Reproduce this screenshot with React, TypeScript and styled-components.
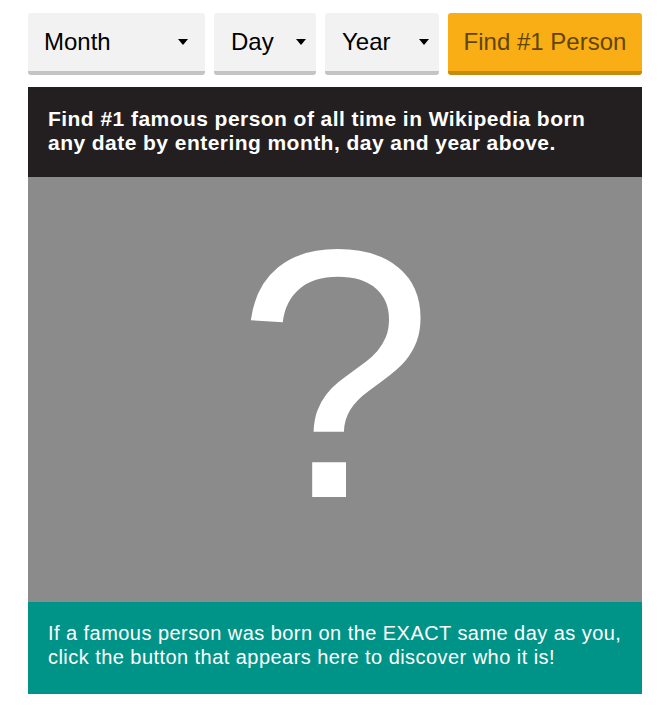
import React from 'react';
import styled, { createGlobalStyle } from 'styled-components';

const GlobalStyle = createGlobalStyle`
  body {
    margin: 0;
    background: #ffffff;
    font-family: 'Liberation Sans', Arial, sans-serif;
  }
`;

const Page = styled.div`
  width: 614px;
  padding: 13px 0 14px 28px;
`;

const Toolbar = styled.div`
  display: flex;
  gap: 9px;
  margin-bottom: 12px;
`;

const Dropdown = styled.div<{ $width: number; $padRight: number }>`
  box-sizing: border-box;
  width: ${(p) => p.$width}px;
  height: 62px;
  display: flex;
  align-items: center;
  padding: 0 ${(p) => p.$padRight}px 0 16px;
  background: #f2f2f2;
  border-bottom: 4px solid #c4c4c4;
  border-radius: 3px;
  font-size: 24px;
  color: #000;
  cursor: pointer;
`;

const Label = styled.span<{ $shift?: number }>`
  flex: 1;
  padding-left: ${(p) => p.$shift ?? 0}px;
`;

const FindButton = styled.button`
  box-sizing: border-box;
  width: 194px;
  height: 62px;
  padding: 0;
  border: none;
  border-bottom: 4px solid #c78b0f;
  border-radius: 3px;
  background: #f9ae16;
  color: #604500;
  font-family: 'Liberation Sans', Arial, sans-serif;
  font-size: 24px;
  cursor: pointer;
`;

const Card = styled.div`
  width: 614px;
`;

const Intro = styled.div`
  background: #231f20;
  color: #fff;
  font-weight: bold;
  font-size: 21px;
  letter-spacing: 0.45px;
  line-height: 24px;
  padding: 20px 20px 22px;
`;

const Portrait = styled.div`
  box-sizing: border-box;
  height: 425px;
  padding-top: 20px;
  background: #8b8b8b;
  color: #fff;
  text-align: center;
  font-size: 355px;
  line-height: 355px;
`;

const Hint = styled.div`
  background: #009488;
  color: #fff;
  font-size: 20px;
  letter-spacing: 0.45px;
  line-height: 24px;
  padding: 19px 10px 25px 20px;
`;

const Caret = () => (
  <svg width="10" height="6" viewBox="0 0 10 6">
    <path d="M0 0h10L5 6z" fill="#000" />
  </svg>
);

const Select = ({ label, width, padRight, shift }: { label: string; width: number; padRight: number; shift?: number }) => (
  <Dropdown $width={width} $padRight={padRight}>
    <Label $shift={shift}>{label}</Label>
    <Caret />
  </Dropdown>
);

const App = () => (
  <Page>
    <GlobalStyle />
    <Toolbar>
      <Select label="Month" width={177} padRight={17} />
      <Select label="Day" width={102} padRight={10} shift={1} />
      <Select label="Year" width={114} padRight={10} shift={1} />
      <FindButton>Find #1 Person</FindButton>
    </Toolbar>
    <Card>
      <Intro>
        Find #1 famous person of all time in Wikipedia born any date by entering month, day and year above.
      </Intro>
      <Portrait>?</Portrait>
      <Hint>
        If a famous person was born on the EXACT same day as you, click the button that appears here to discover
        who it is!
      </Hint>
    </Card>
  </Page>
);

export default App;
